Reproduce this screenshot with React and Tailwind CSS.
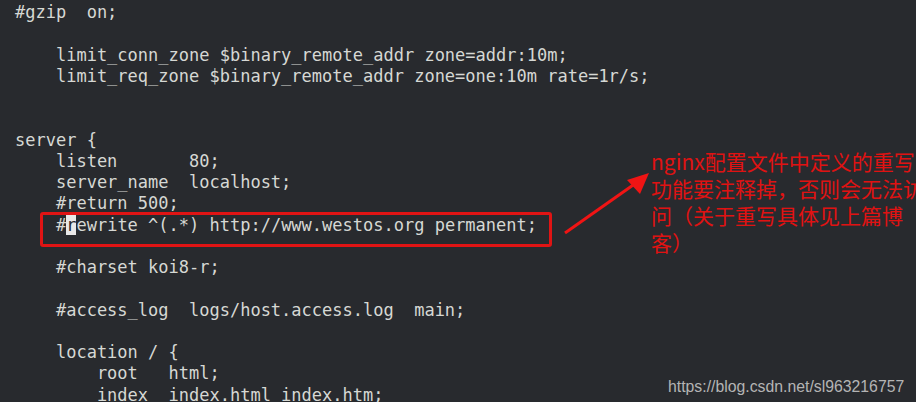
import React from 'react';

const lines = [
  '#gzip  on;',
  '',
  '    limit_conn_zone $binary_remote_addr zone=addr:10m;',
  '    limit_req_zone $binary_remote_addr zone=one:10m rate=1r/s;',
  '',
  '',
  'server {',
  '    listen       80;',
  '    server_name  localhost;',
  '    #return 500;',
  null, // rewrite line, drawn with the cursor
  '',
  '    #charset koi8-r;',
  '',
  '    #access_log  logs/host.access.log  main;',
  '',
  '    location / {',
  '        root   html;',
  '        index  index.html index.htm;',
];

function App() {
  return (
    <div className="relative w-[916px] h-[402px] overflow-hidden bg-[#282a2e]">
      {/* terminal text */}
      <pre className="flex flex-col pl-[15px] pt-[2px] text-[17px] leading-[21.25px] text-[#d6d8d4] font-['DejaVu_Sans_Mono',monospace]">
        {lines.map((line, i) =>
          line === null ? (
            <div key={i} className="h-[21.25px] whitespace-pre">
              {'    #'}
              <span className="bg-[#e8e8e8] text-[#282a2e]">r</span>
              {'ewrite ^(.*) http://www.westos.org permanent;'}
            </div>
          ) : (
            <div key={i} className="h-[21.25px] whitespace-pre">{line}</div>
          )
        )}
      </pre>

      {/* red box around the rewrite line */}
      <div className="absolute left-[40px] top-[212px] w-[512px] h-[35px] border-[3px] border-[#e01414] rounded-[3px]" />

      {/* arrow */}
      <svg className="absolute left-0 top-0" width="916" height="402">
        <line x1="565" y1="233" x2="636" y2="183" stroke="#f01414" strokeWidth="3" />
        <polygon points="649,173 627,180 640,194" fill="#f01414" />
      </svg>

      {/* annotation */}
      <div className="absolute left-[651px] top-[148px] flex flex-col text-[21px] leading-[27px] text-[#e01212] whitespace-nowrap font-['Noto_Sans_CJK_SC','Noto_Sans',sans-serif]">
        <span>nginx配置文件中定义的重写</span>
        <span>功能要注释掉，否则会无法访</span>
        <span>问（关于重写具体见上篇博</span>
        <span>客）</span>
      </div>

      {/* watermark */}
      <div className="absolute left-[668px] top-[375px] text-[15.8px] text-[#b4b4b4] font-['Liberation_Sans',Arial,sans-serif]">
        https://blog.csdn.net/sl963216757
      </div>
    </div>
  );
}

export default App;
